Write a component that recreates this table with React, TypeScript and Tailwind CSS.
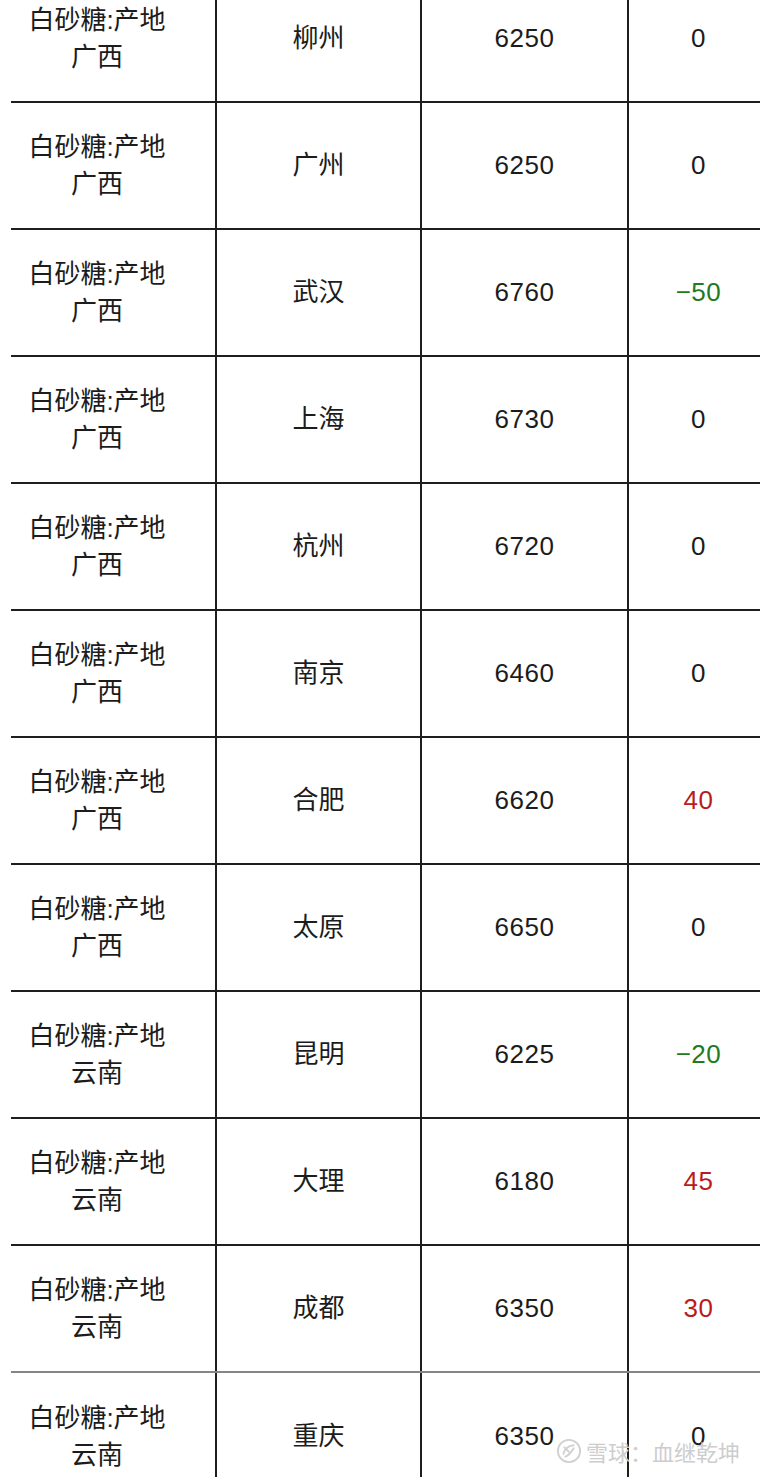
import React from "react";

type Row = { region: string; city: string; price: string; change: string; color?: "green" | "red"; grey?: boolean; last?: boolean };

const rows: Row[] = [
  { region: "广西", city: "柳州", price: "6250", change: "0" },
  { region: "广西", city: "广州", price: "6250", change: "0" },
  { region: "广西", city: "武汉", price: "6760", change: "−50", color: "green" },
  { region: "广西", city: "上海", price: "6730", change: "0" },
  { region: "广西", city: "杭州", price: "6720", change: "0" },
  { region: "广西", city: "南京", price: "6460", change: "0" },
  { region: "广西", city: "合肥", price: "6620", change: "40", color: "red" },
  { region: "广西", city: "太原", price: "6650", change: "0" },
  { region: "云南", city: "昆明", price: "6225", change: "−20", color: "green" },
  { region: "云南", city: "大理", price: "6180", change: "45", color: "red" },
  { region: "云南", city: "成都", price: "6350", change: "30", color: "red", grey: true },
  { region: "云南", city: "重庆", price: "6350", change: "0", last: true },
];

export default function App() {
  return (
    <div
      className="relative w-[760px] h-[1477px] overflow-hidden bg-white text-[#1c1c1c]"
      style={{ fontFamily: '"Liberation Sans", "Noto Sans CJK SC", sans-serif' }}
    >
      <div className="ml-[11px] mt-[-24px] w-[757px] flex flex-col">
        {rows.map((r, i) => (
          <div
            key={i}
            className={`flex h-[127px] ${r.last ? "" : r.grey ? "border-b-2 border-[#858585]" : "border-b-2 border-[#1e1e1e]"}`}
          >
            <div className="w-[204px] pr-[32px] flex flex-col items-center justify-center text-[26px] leading-[37px]">
              <span>白砂糖:产地</span>
              <span>{r.region}</span>
            </div>
            <div className="w-[205px] border-l-2 border-[#1e1e1e] flex items-center justify-center text-[26px]">
              {r.city}
            </div>
            <div className="w-[207px] border-l-2 border-[#1e1e1e] flex items-center justify-center text-[26px] tracking-[0.5px]">
              {r.price}
            </div>
            <div
              className={`flex-1 border-l-2 border-[#1e1e1e] flex items-center justify-center text-[26px] tracking-[0.5px] ${
                r.color === "green" ? "text-[#217a1f]" : r.color === "red" ? "text-[#b81c1c]" : ""
              }`}
            >
              {r.change}
            </div>
          </div>
        ))}
      </div>

      <div className="absolute left-[556px] top-[1438px] flex items-center gap-[4px] text-[#cdcdcd] text-[22px] leading-none">
        <svg width="26" height="26" viewBox="0 0 28 28" fill="none">
          <circle cx="14" cy="14" r="12" stroke="#d0d0d0" strokeWidth="2" />
          <path d="M8 17c2-6 6-9 11-9" stroke="#d0d0d0" strokeWidth="2" strokeLinecap="round" />
          <path d="M10 20c3-1 6-4 9-9" stroke="#d0d0d0" strokeWidth="2" strokeLinecap="round" />
          <path d="M9 10l5 5" stroke="#d0d0d0" strokeWidth="2" strokeLinecap="round" />
        </svg>
        <span style={{ fontFamily: '"Noto Sans CJK SC", sans-serif' }}>雪球：血继乾坤</span>
      </div>
    </div>
  );
}
